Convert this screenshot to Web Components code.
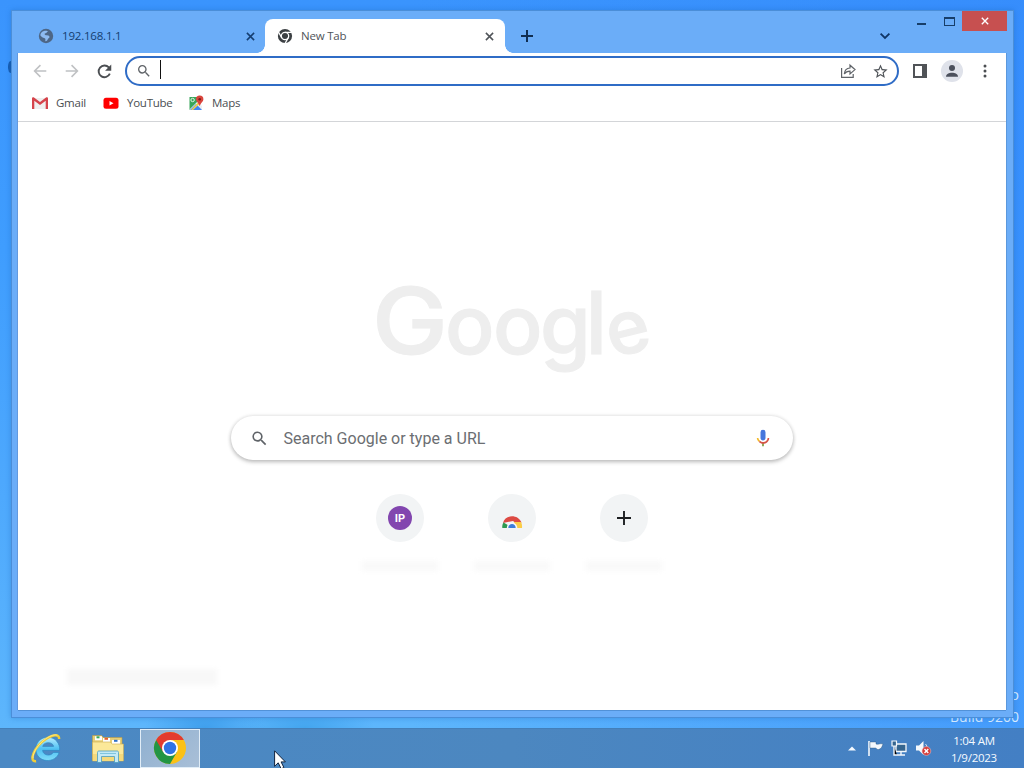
<!DOCTYPE html>
<html lang="en">
<head>
<meta charset="utf-8">
<title>New Tab</title>
<style>
  html,body{margin:0;height:100%;overflow:hidden}
  body{font:12px/16px "Open Sans","Noto Sans",sans-serif;color:#4a4d51}
</style>
</head>
<body>
<desk-top>
  <browser-window>
    <tab-item slot="tabs" icon="globe">192.168.1.1</tab-item>
    <tab-item slot="tabs" icon="chromeMono" active>New Tab</tab-item>
    <tool-bar slot="bars"></tool-bar>
    <bookmark-bar slot="bars">
      <bookmark-link icon="gmail" style="width:71px">Gmail</bookmark-link>
      <bookmark-link icon="youtube" style="width:85px">YouTube</bookmark-link>
      <bookmark-link icon="maps">Maps</bookmark-link>
    </bookmark-bar>
    <new-tab-page>
      <shortcut-tile icon="ip"></shortcut-tile>
      <shortcut-tile icon="chromeHalf"></shortcut-tile>
      <shortcut-tile icon="plus"></shortcut-tile>
    </new-tab-page>
  </browser-window>
  <task-bar slot="bar"></task-bar>
</desk-top>

<script>
const ICONS={
  globe:['0 0 16 16','<circle cx="8" cy="8" r="7.2" fill="#4d6686"/><path fill="#8dbaf0" d="M2.300 7.200C2.500 5 4 3.300 6 3c1.500-.5 3.500-.2 4.200.5-1.500.1-1.200 1.500-2.700 1.800-1.400.2-1 1.700.3 2 1.500.2 3.200-.1 3.700 1.400.3 1.400-1.300 1.400-1.600 2.400-.3 1.100-1.200 2.200-2.400 2.100-.7-.9.5-1.800-.4-2.700C6 9.700 3.300 9.500 2.300 7.200z"/>'],
  chromeMono:['0 0 16 16','<circle cx="8" cy="8" r="7.100" fill="#3c4043"/><circle cx="8" cy="8" r="3.700" fill="none" stroke="#fff" stroke-width="1.300"/><path stroke="#fff" stroke-width="1.300" d="M8 4.300h7M4.800 9.900 1.300 3.800M11.200 9.900 7.700 16"/>'],
  close:['0 0 10 10','<path stroke="currentColor" stroke-width="1.700" d="m1 1 8 8M9 1 1 9"/>'],
  add:['0 0 12 12','<path stroke="#0f2d52" stroke-width="2" d="M6 0v12M0 6h12"/>'],
  down:['0 0 10 6','<path fill="none" stroke="#0f3566" stroke-width="1.800" d="m.6.700 4.400 4.200L9.400.700"/>'],
  back:['0 0 16 16','<path fill="none" stroke="currentColor" stroke-width="1.800" d="M15.200 8H2M8.500 1.300 1.800 8l6.700 6.700"/>'],
  forward:['0 0 16 16','<path fill="none" stroke="currentColor" stroke-width="1.800" d="M.8 8H14M7.500 1.300 14.200 8l-6.700 6.700"/>'],
  reload:['0 0 16 16','<path fill="none" stroke="#4b4e52" stroke-width="2" d="M13.700 10.300A6.200 6.200 0 1 1 12.600 3.700L14 5.200"/><path fill="#4b4e52" d="M15.200.600v6.600H8.600z"/>'],
  search:['0 0 24 24','<path fill="#5f6368" d="M15.500 14h-.79l-.28-.27A6.471 6.471 0 0 0 16 9.500 6.500 6.500 0 1 0 9.500 16c1.610 0 3.090-.59 4.230-1.570l.27.28v.79l5 4.990L20.490 19l-4.990-5zm-6 0C7.010 14 5 11.990 5 9.500S7.010 5 9.500 5 14 7.010 14 9.500 11.990 14 9.500 14z"/>'],
  share:['0 0 16 16','<path fill="none" stroke="#5f6368" stroke-width="1.200" d="M1.600 5v9.400h11.600V11M4.300 11C4.600 7.400 6.600 5.200 10 5V2.200L15 6.600 10 11V8.200C7.400 8.200 5.600 9 4.300 11z"/>'],
  star:['0 0 24 24','<path fill="#4f5358" d="m22 9.240-7.190-.62L12 2 9.190 8.630 2 9.240l5.460 4.730L5.820 21 12 17.270 18.180 21l-1.630-7.030L22 9.240zM12 15.400l-3.760 2.270 1-4.280-3.320-2.880 4.380-.38L12 6.100l1.710 4.040 4.380.38-3.320 2.880 1 4.280L12 15.400z"/>'],
  panel:['0 0 14 14','<path fill="#505357" fill-rule="evenodd" d="M0 0h14v14H0zM2 2v10h7V2z"/>'],
  person:['0 0 22 22','<circle cx="11" cy="11" r="11" fill="#dfe2ea"/><circle cx="11" cy="8" r="3" fill="#4b505c"/><path fill="#4b505c" d="M5 16.800c0-5.400 12-5.400 12 0z"/>'],
  dots:['0 0 4 14','<g fill="#4b4e52"><circle cx="2" cy="2" r="1.500"/><circle cx="2" cy="7" r="1.500"/><circle cx="2" cy="12" r="1.500"/></g>'],
  gmail:['0 0 16 12','<path fill="#efefef" d="M2 1h12v11H2z"/><path fill="#d5434b" d="M0 12V1.500C0 .3 1.200 0 2 .500L8 5 14 .500c.8-.5 2-.2 2 1V12h-2.300V3.700L8 8 2.300 3.700V12z"/>'],
  youtube:['0 0 16 12','<rect width="15" height="11" x=".5" y=".8" fill="#f00" rx="2.500"/><path fill="#fff" d="m6.500 4 4 2.300-4 2.300z"/>'],
  maps:['0 0 16 16','<path fill="#39a65a" d="M1.500 2h9v6l-9 7z"/><path fill="#e9eef3" d="m1.500 14.500 8-8L14 11v4H8z"/><path fill="#4285f4" d="m2 15 6-6 6 6z"/><path fill="#f6cf45" d="m3 15 7.500-8 1.500 1.500-7 6.500z"/><circle cx="4.600" cy="5" r="1.700" fill="none" stroke="#e5f2e8"/><path fill="#da453c" d="M11.700.500a3.700 3.700 0 0 0-3.700 3.700c0 2.500 2.600 3.300 3.700 7 1.100-3.700 3.700-4.500 3.700-7A3.700 3.700 0 0 0 11.700.500z"/><circle cx="11.700" cy="4.200" r="1.300" fill="#7d1b18"/>'],
  mic:['0 0 24 24','<path fill="#4777dd" d="M12 15c1.660 0 3-1.310 3-2.970V4.970A3 3 0 0 0 12 2a3 3 0 0 0-3 2.970v7.060C9 13.690 10.340 15 12 15z"/><path fill="#7d9a3c" d="M11 18.080h2V22h-2z"/><path fill="#f3b928" d="M7.050 16.870A6.730 6.730 0 0 1 4.500 12h2c0 1.500 1 2.420 1.970 3.340z"/><path fill="#d65345" d="M12 16.930a4.970 4.970 0 0 1-3.540-1.550l-1.410 1.490C8.310 18.140 9.990 19 12 19c3.870 0 7.490-2.920 7.490-7h-2c0 2.920-2.740 4.930-5.490 4.930z"/>'],
  ip:['0 0 24 24','<circle cx="12" cy="12" r="12" fill="#8246af"/><text x="12" y="15.800" text-anchor="middle" fill="#fff" font-family="Roboto" font-size="11" font-weight="700">IP</text>'],
  chromeHalf:['0 0 24 24','<path fill="#dd4a43" d="M3 17C5 8.500 18 8 21.500 16.500L17 18l-4-3z"/><path fill="#2e9950" d="M2.300 22c-.2-2 .1-3.800 1.200-5.500l5.100 2.900-.8 2.600z"/><path fill="#fbcc46" d="M14 16h7c1 1.800 1.200 3.800 1 6h-6z"/><path fill="#f5f8fb" d="M6.800 22c0-7 10.500-7 10.500 0z"/><path fill="#3d7dd9" d="M8.300 22c0-5.400 7.400-5.400 7.400 0z"/>'],
  plus:['0 0 24 24','<path stroke="#1d1f21" stroke-width="1.900" d="M12 5v14M5 12h14"/>'],
  ie:['0 0 34 34','<defs><linearGradient id="a" x2="0" y2="1"><stop stop-color="#b5ecff"/><stop offset=".5" stop-color="#4fc1f3"/><stop offset="1" stop-color="#7fdcf9"/></linearGradient></defs><path fill="url(#a)" stroke="#2a88c4" stroke-width=".7" d="M31.500 19.500H13.400c.4 5.600 8.600 6.700 11.300 2.200h6.200C28 33.500 7 33.800 6.200 18.600 6 4.800 22 2.500 28.200 9.500c2.600 3 3.500 6.300 3.300 10zM13.500 15.300h11.600c-.8-5.300-10.600-5.300-11.600 0z"/><path fill="none" stroke="#f0cd38" stroke-width="2.600" d="M6.500 31C-2 32 4 16 17 7.500 25 2.500 31 1.800 31 7.500"/><path fill="none" stroke="#fff0a2" stroke-width=".8" d="M3.300 28C2.500 22 9 12.500 17 7c5-3.300 9.500-4.600 12-3.500"/>'],
  folder:['0 0 32 30','<path fill="#e8cf76" stroke="#b99b45" stroke-width=".6" d="M.5 27V2.500h9l2 2h18.500V27z"/><path fill="#fff" d="M3 3.300h7v4H3zM11 5h7v4h-7zM20 7h8v4h-8z"/><path fill="#37a957" d="M4.500 3.300h3v2h-3z"/><path fill="#e4602f" d="M12.500 4.800H16v2h-3.500z"/><path fill="#2f70c9" d="M22 6.800h3.500v2H22z"/><path fill="#fbe899" stroke="#c9ac50" stroke-width=".6" d="M.5 28V9H18l2.500 2h11v17z"/><path fill="#f4d97c" d="M1 21h30v7H1z"/><path fill="#c3e9f7" stroke="#4a9dbf" stroke-width=".8" d="M5.500 29.500V19.500c0-1 .5-1.500 1.500-1.500h18c1 0 1.500.5 1.500 1.500v10h-4v-6h-13v6z"/><path fill="none" stroke="#7fc5df" d="M8 20.500h16"/>'],
  chrome:['0 0 32 32','<circle cx="16" cy="16" r="16" fill="#fbc116"/><path fill="#229544" d="M2.140 8A16 16 0 0 0 16 32l6.930-12L16 16z"/><path fill="#e33b2e" d="M2.140 8A16 16 0 0 1 29.860 8H16l-6.930 12z"/><circle cx="16" cy="16" r="8" fill="#fff"/><circle cx="16" cy="16" r="6.200" fill="#2f73e4"/>'],
  up:['0 0 8 5','<path fill="#f4faff" d="M0 4.500 4 .500l4 4z"/>'],
  flag:['0 0 16 16','<path stroke="#f4f8fc" stroke-width="1.600" d="M2 1v15"/><path fill="#f4f8fc" stroke="#245178" stroke-width=".4" d="M3 2h6v2c2 1 4-1 7 0-1 3-2 5-4.500 5.500C9.500 9.700 9.600 8 8.500 8H3z"/>'],
  network:['0 0 16 16','<path fill="#35658f" stroke="#f4f8fc" stroke-width="1.300" d="M5 4h10v7.500H5z"/><path stroke="#f4f8fc" stroke-width="1.400" d="M10 12v3M6 15h8M3 6v9h3"/><path fill="#35658f" stroke="#f4f8fc" stroke-width="1.200" d="M1 1h4.500v5H1z"/>'],
  volume:['0 0 16 16','<path fill="#f4f8fc" d="M1 5.500h3L8.500 1v14L4 10.500H1z"/><path fill="none" stroke="#d3e1ee" d="M10.500 4q2 2 1.500 4"/><circle cx="11.400" cy="11" r="4.400" fill="#d63c39" stroke="#f3c5c4" stroke-width=".5"/><path stroke="#fff" stroke-width="1.400" d="m9.500 9.100 3.800 3.800m0-3.800-3.800 3.800"/>'],
  cursor:['0 0 12 18','<path fill="#fff" stroke="#10233d" d="M.6.800v15.500l3.600-3.500 3 6 2.700-1.300-2.800-5.600h4.300z"/>'],
};

// icon with name / w / h attributes
class XIcon extends HTMLElement{
  constructor(){
    super();
    this.attachShadow({mode:'open'});
  }
  connectedCallback(){
    const [box,body]=ICONS[this.getAttribute('name')];
    const w=this.getAttribute('w')||16;
    const h=this.getAttribute('h')||w;
    this.shadowRoot.innerHTML=`
      <style>
        :host{display:block;flex:none;width:${w}px;height:${h}px}
        svg{display:block;width:100%;height:100%;overflow:visible}
      </style>
      <svg viewBox="${box}">${body}</svg>`;
  }
}
customElements.define('x-icon',XIcon);

class DeskTop extends HTMLElement{
  constructor(){
    super();
    this.attachShadow({mode:'open'}).innerHTML=`
      <style>
        :host{
          position:relative;
          display:flex;
          flex-direction:column;
          width:1024px;
          height:768px;
          overflow:hidden;
          background:linear-gradient(#3a94fd 0,#3f9dfe 250px,#4da8fd 480px,#5db6fc 728px);
        }
        :host::before{
          content:'';
          position:absolute;
          right:0;top:0;bottom:0;
          width:60%;
          background:linear-gradient(90deg,transparent,#3489fb99);
        }
        .area{
          box-sizing:border-box;
          height:728px;
          padding:10px 10px 10px 11px;
          position:relative;
          background:
            radial-gradient(60px 30px at 205px 728px,#3f9fec,transparent),
            radial-gradient(70px 24px at 305px 728px,#43a5ee,transparent);
        }
        .mark{
          position:absolute;
          right:5px;
          top:684px;
          text-align:right;
          color:#d9edff;
          font-size:14px;
          line-height:22px;
          white-space:nowrap;
        }
        .speck{
          position:absolute;
          left:8px;top:61px;
          width:5px;height:12px;
          border-radius:50%;
          background:#155cb0;
        }
      </style>
      <div class="area">
        <div class="mark">Windows 8 Pro<br>Build 9200</div>
        <div class="speck"></div>
        <slot></slot>
      </div>
      <slot name="bar"></slot>`;
  }
}
customElements.define('desk-top',DeskTop);

class BrowserWindow extends HTMLElement{
  constructor(){
    super();
    this.attachShadow({mode:'open'}).innerHTML=`
      <style>
        :host{
          position:relative;
          box-sizing:border-box;
          display:flex;
          flex-direction:column;
          width:1003px;
          height:708px;
          padding:1px 8px 8px 7px;
          background:#6badf8;
          box-shadow:inset 0 0 0 1px #4b8ed8,0 0 5px #1b65b866;
        }
        header{
          display:flex;
          height:42px;
          align-items:flex-start;
        }
        .tabs{display:flex;padding:8px 0 0 8px}
        .add{padding:19px 0 0 16px}
        .down{margin-left:auto;padding:22px 27px 0 0}
        .min{width:9px;height:2px;margin:12px 18px 0 0;background:#173e69}
        .max{box-sizing:border-box;width:11px;height:9px;margin:6px 7px 0 0;border:1px solid #173e69;border-top-width:2px}
        .x{
          display:grid;
          place-items:center;
          width:45px;
          height:20px;
          margin-right:-1px;
          color:#fff;
          background:#c75050;
        }
        main{
          flex:1;
          display:flex;
          flex-direction:column;
          background:#fff;
          box-shadow:0 1px 0 #5191d8,1px 0 0 #5b98dd,-1px 0 0 #6299df;
        }
      </style>
      <header>
        <div class="tabs"><slot name="tabs"></slot></div>
        <x-icon class="add" name="add" w="12"></x-icon>
        <x-icon class="down" name="down" w="10" h="6"></x-icon>
        <div class="min"></div>
        <div class="max"></div>
        <div class="x"><x-icon name="close" w="8"></x-icon></div>
      </header>
      <main><slot name="bars"></slot><slot></slot></main>`;
  }
}
customElements.define('browser-window',BrowserWindow);

class TabItem extends HTMLElement{
  constructor(){
    super();
    this.attachShadow({mode:'open'});
  }
  connectedCallback(){
    this.shadowRoot.innerHTML=`
      <style>
        :host{
          position:relative;
          box-sizing:border-box;
          display:flex;
          align-items:center;
          width:239px;
          height:34px;
          padding:0 10.500px 0 12px;
          color:#153e70;
          font-size:11.500px;
          letter-spacing:-.2px;
        }
        :host([active]){
          width:240px;
          padding-right:11.500px;
          color:#505459;
          background:#fff;
          border-radius:8px 8px 0 0;
        }
        /* curved feet of the selected tab */
        :host([active])::before,:host([active])::after{
          content:'';
          position:absolute;
          bottom:0;
          width:8px;
          height:8px;
        }
        :host([active])::before{left:-8px;background:radial-gradient(circle at 0 0,transparent 7.500px,#fff 8px)}
        :host([active])::after{right:-8px;background:radial-gradient(circle at 100% 0,transparent 7.500px,#fff 8px)}
        span{flex:1;margin-left:8px}
      </style>
      <x-icon name="${this.getAttribute('icon')}" w="16"></x-icon>
      <span><slot></slot></span>
      <x-icon name="close" w="9"></x-icon>`;
  }
}
customElements.define('tab-item',TabItem);

class ToolBar extends HTMLElement{
  constructor(){
    super();
    this.attachShadow({mode:'open'}).innerHTML=`
      <style>
        :host{
          display:flex;
          align-items:center;
          height:36px;
          padding-left:15px;
          color:#bfc1c3;
        }
        .back,.fwd{margin-right:18px}
        .box{
          box-sizing:border-box;
          display:flex;
          align-items:center;
          width:774px;
          height:30px;
          margin:0 14px 0 13px;
          padding:0 8px 0 9px;
          border:2px solid #2f6cc6;
          border-radius:15px;
        }
        i{width:1px;height:19px;margin:-3px auto 0 8px;background:#111}
        .star{margin-left:16px}
        .me{margin:0 20px 0 14px}
      </style>
      <x-icon class="back" name="back" w="14"></x-icon>
      <x-icon class="fwd" name="forward" w="14"></x-icon>
      <x-icon name="reload" w="15"></x-icon>
      <div class="box">
        <x-icon name="search" w="16"></x-icon><i></i>
        <x-icon name="share" w="16"></x-icon>
        <x-icon class="star" name="star" w="17"></x-icon>
      </div>
      <x-icon name="panel" w="14"></x-icon>
      <x-icon class="me" name="person" w="22"></x-icon>
      <x-icon name="dots" w="4" h="14"></x-icon>`;
  }
}
customElements.define('tool-bar',ToolBar);

class BookmarkBar extends HTMLElement{
  constructor(){
    super();
    this.attachShadow({mode:'open'}).innerHTML=`
      <style>
        :host{
          box-sizing:border-box;
          display:flex;
          height:33px;
          padding:5px 14px 0;
          border-bottom:1px solid #d3d5d8;
        }
      </style>
      <slot></slot>`;
  }
}
customElements.define('bookmark-bar',BookmarkBar);

class BookmarkLink extends HTMLElement{
  constructor(){
    super();
    this.attachShadow({mode:'open'});
  }
  connectedCallback(){
    this.shadowRoot.innerHTML=`
      <style>
        :host{display:flex;align-items:center;height:18px;font-size:11.500px;letter-spacing:-.25px;white-space:nowrap}
        span{margin:-1px 0 0 8px}
      </style>
      <x-icon name="${this.getAttribute('icon')}" w="16" h="${this.getAttribute('icon')=='maps'?16:12}"></x-icon>
      <span><slot></slot></span>`;
  }
}
customElements.define('bookmark-link',BookmarkLink);

class NewTabPage extends HTMLElement{
  constructor(){
    super();
    this.attachShadow({mode:'open'}).innerHTML=`
      <style>
        :host{
          flex:1;
          display:flex;
          flex-direction:column;
          align-items:center;
          padding-top:143px;
        }
        .logo{
          display:block;
          width:300px;
          height:130px;
          overflow:visible;
          fill:#eee;
          font:500 82px Inter,sans-serif;
        }
        .search{
          box-sizing:border-box;
          display:flex;
          align-items:center;
          width:562px;
          height:44px;
          margin-top:21px;
          padding:0 20px 0 19px;
          border-radius:22px;
          color:#6b6e72;
          font:16px Roboto,sans-serif;
          box-shadow:0 2px 4px #0000003d,0 0 4px #0000001c;
        }
        .search span{flex:1;margin-left:14.500px}
        .tiles{display:flex;margin-top:34px}
        .promo{
          align-self:flex-start;
          width:150px;
          height:16px;
          margin:97px 0 0 49px;
          background:#f8f8f8;
          filter:blur(2px);
        }
      </style>
      <svg class="logo" viewBox="361 265 300 130"><text stroke="#eee" y="354"><tspan x="371" font-size="92" textLength="76" lengthAdjust="spacingAndGlyphs">G</tspan><tspan x="444 492 539">oog</tspan><tspan x="584.500" font-size="86">l</tspan><tspan x="611" y="358" rotate="-14" font-size="74">e</tspan></text></svg>
      <div class="search">
        <x-icon name="search" w="19"></x-icon>
        <span>Search Google or type a URL</span>
        <x-icon name="mic" w="20"></x-icon>
      </div>
      <div class="tiles"><slot></slot></div>
      <div class="promo"></div>`;
  }
}
customElements.define('new-tab-page',NewTabPage);

class ShortcutTile extends HTMLElement{
  constructor(){
    super();
    this.attachShadow({mode:'open'});
  }
  connectedCallback(){
    this.shadowRoot.innerHTML=`
      <style>
        :host{display:flex;flex-direction:column;align-items:center;width:112px}
        .disc{
          display:grid;
          place-items:center;
          width:48px;
          height:48px;
          border-radius:50%;
          background:#f2f4f5;
        }
        .label{width:76px;height:10px;margin:19px 0 1px;background:#f9f9f9;filter:blur(2px)}
      </style>
      <div class="disc"><x-icon name="${this.getAttribute('icon')}" w="24"></x-icon></div>
      <div class="label"></div>`;
  }
}
customElements.define('shortcut-tile',ShortcutTile);

class TaskBar extends HTMLElement{
  constructor(){
    super();
    this.attachShadow({mode:'open'}).innerHTML=`
      <style>
        :host{
          position:relative;
          box-sizing:border-box;
          display:flex;
          align-items:center;
          height:40px;
          padding:0 25px 0 30px;
          background:linear-gradient(90deg,#4b89c4,#4c87c0 50%,#437fc4);
          box-shadow:inset 0 1px 0 #437fb9;
        }
        .folder{margin:0 15px 0 29px}
        .app{
          box-sizing:border-box;
          display:grid;
          place-items:center;
          width:60px;
          height:39px;
          border:1px solid #e1edf7;
          background:linear-gradient(135deg,#8fb0d0,#a9bfd7);
        }
        .cursor{position:absolute;left:274px;top:22px}
        .tray{display:flex;align-items:center;gap:8px;margin-left:auto}
        .tray :first-child{margin-right:3px}
        .clock{
          width:50px;
          margin:1px 0 0 18px;
          color:#f5faff;
          font-size:11.500px;
          line-height:17px;
          letter-spacing:-.25px;
          text-align:center;
          white-space:nowrap;
        }
      </style>
      <x-icon name="ie" w="32"></x-icon>
      <x-icon class="folder" name="folder" w="34" h="30"></x-icon>
      <div class="app"><x-icon name="chrome" w="32"></x-icon></div>
      <x-icon class="cursor" name="cursor" w="12" h="18"></x-icon>
      <div class="tray">
        <x-icon name="up" w="8" h="5"></x-icon>
        <x-icon name="flag" w="16"></x-icon>
        <x-icon name="network" w="16"></x-icon>
        <x-icon name="volume" w="16"></x-icon>
      </div>
      <div class="clock">1:04 AM<br>1/9/2023</div>`;
  }
}
customElements.define('task-bar',TaskBar);
</script>
</body>
</html>
